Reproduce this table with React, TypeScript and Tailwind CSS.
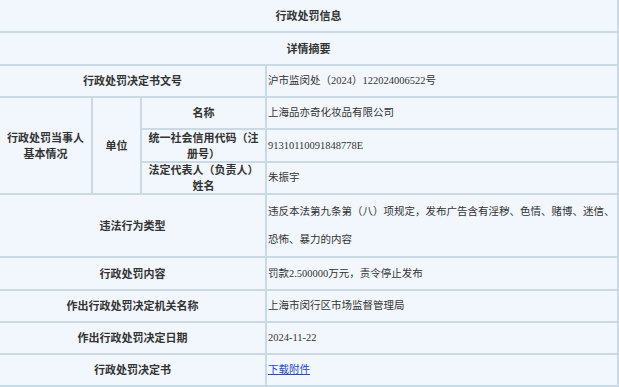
import React from 'react';

const label = 'flex items-center justify-center text-center bg-[#f2f7fd] px-[4px] font-bold text-[11px] leading-[16px] text-[#333]';
const value = 'flex items-center bg-[#f2f7fd] pl-[1px] text-[10.5px] text-[#333]';

const App: React.FC = () => {
  return (
    <div className="w-[619px] h-[387px] overflow-hidden bg-[#f2f7fd] font-['Liberation_Serif','Noto_Sans_CJK_SC',serif]">
      <div className="grid grid-cols-[91px_47px_123px_350px] grid-rows-[31px_31px_30px_30px_31px_30px_61px_31px_30px_30px_30px] gap-[2px] bg-[#c9d9e5] border-r-2 border-b-2 border-[#c9d9e5]">
        {/* header rows */}
        <div className={`${label} col-span-4`}>行政处罚信息</div>
        <div className={`${label} col-span-4`}>详情摘要</div>

        <div className={`${label} col-span-3`}>行政处罚决定书文号</div>
        <div className={value}>沪市监闵处（2024）122024006522号</div>

        {/* party info */}
        <div className={`${label} row-span-3`}>行政处罚当事人基本情况</div>
        <div className={`${label} row-span-3`}>单位</div>
        <div className={label}>名称</div>
        <div className={value}>上海品亦奇化妆品有限公司</div>
        <div className={label}>统一社会信用代码（注册号）</div>
        <div className={value}>91310110091848778E</div>
        <div className={label}>法定代表人（负责人）姓名</div>
        <div className={value}>朱振宇</div>

        <div className={`${label} col-span-3`}>违法行为类型</div>
        <div className={`${value} leading-[28px]`}>
          <span>
            违反本法第九条第（八）项规定，发布广告含有淫秽、色情、赌博、迷信、
            <br />
            恐怖、暴力的内容
          </span>
        </div>

        <div className={`${label} col-span-3`}>行政处罚内容</div>
        <div className={value}>罚款2.500000万元，责令停止发布</div>

        <div className={`${label} col-span-3`}>作出行政处罚决定机关名称</div>
        <div className={value}>上海市闵行区市场监督管理局</div>

        <div className={`${label} col-span-3`}>作出行政处罚决定日期</div>
        <div className={value}>2024-11-22</div>

        <div className={`${label} col-span-3`}>行政处罚决定书</div>
        <div className={value}>
          <a href="#" className="text-[#2448d8] underline">下载附件</a>
        </div>
      </div>
    </div>
  );
};

export default App;
